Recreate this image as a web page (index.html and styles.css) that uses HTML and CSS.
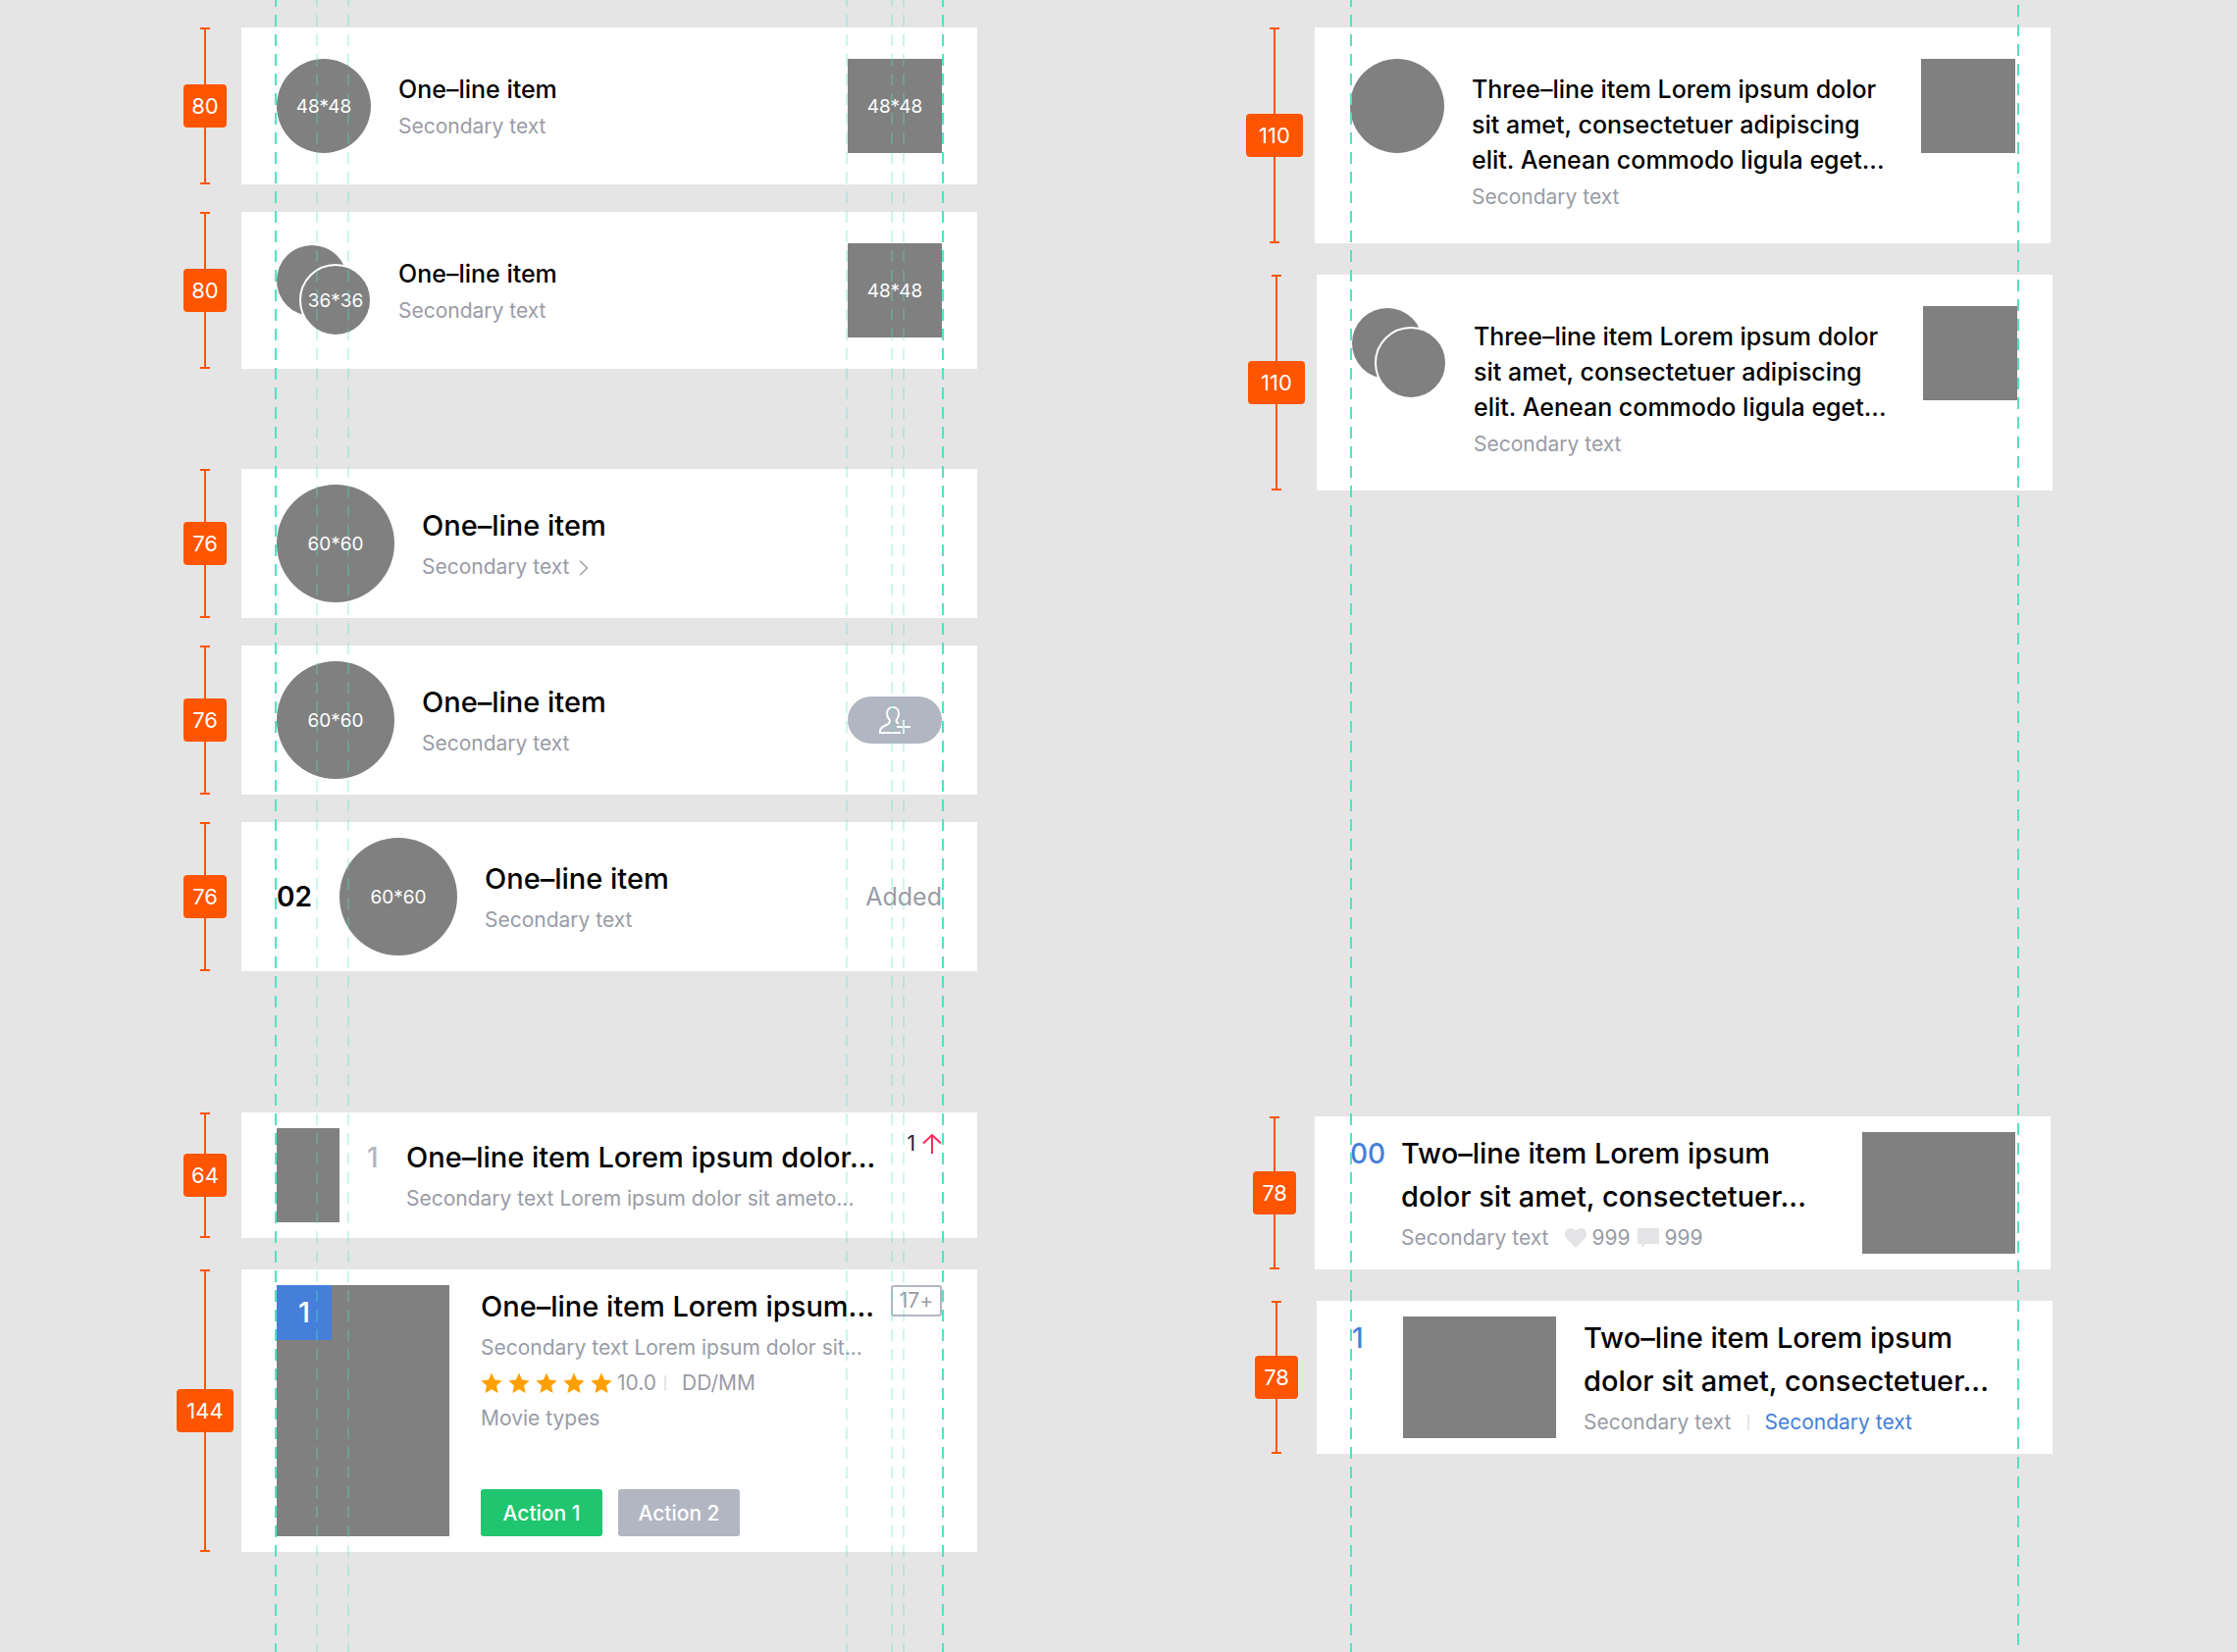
FILE: index.html
```html
<!DOCTYPE html>
<html lang="en">
<head>
<meta charset="utf-8">
<meta name="viewport" content="width=device-width, initial-scale=1">
<title>List item specs</title>
<link rel="stylesheet" href="styles.css">
</head>
<body>
<svg class="sprite" aria-hidden="true">
  <symbol id="star" viewBox="0 0 22 22"><path d="M11 .6l3.1 7 7.6.8-5.7 5.1 1.6 7.5L11 17.2 4.400 21l1.600-7.500L.3 8.400l7.600-.8z"/></symbol>
</svg>
<main class="board">

  <div class="column">
    <section class="group">
      <article class="row">
        <div class="measure"><span class="measure-value">80</span></div>
        <div class="card card-roomy">
          <div class="thumb avatar">48*48</div>
          <div class="text">
            <h3 class="title">One–line item</h3>
            <p class="secondary">Secondary text</p>
          </div>
          <div class="thumb square">48*48</div>
        </div>
      </article>
      <article class="row">
        <div class="measure"><span class="measure-value">80</span></div>
        <div class="card card-roomy">
          <div class="stack"><div class="stack-back"></div><div class="thumb stack-front">36*36</div></div>
          <div class="text">
            <h3 class="title">One–line item</h3>
            <p class="secondary">Secondary text</p>
          </div>
          <div class="thumb square">48*48</div>
        </div>
      </article>
    </section>

    <section class="group group-people">
      <article class="row">
        <div class="measure"><span class="measure-value">76</span></div>
        <div class="card card-person">
          <div class="thumb avatar-large">60*60</div>
          <div class="text">
            <h3 class="title title-large">One–line item</h3>
            <p class="secondary">Secondary text
              <svg class="chevron" width="10" height="16" viewBox="0 0 10 16" aria-hidden="true"><path d="M1 .7l7.500 7.300L1 15.300"/></svg>
            </p>
          </div>
        </div>
      </article>
      <article class="row">
        <div class="measure"><span class="measure-value">76</span></div>
        <div class="card card-person">
          <div class="thumb avatar-large">60*60</div>
          <div class="text">
            <h3 class="title title-large">One–line item</h3>
            <p class="secondary">Secondary text</p>
          </div>
          <button class="follow" type="button" aria-label="Add contact">
            <svg width="32" height="28" viewBox="0 0 32 28" aria-hidden="true"><path d="M20 17.500Q17.200 17 17.700 14Q20 11 20 7.200C20 3.300 17.500 1 14 1S8 3.300 8 7.200Q8 11 10.700 14Q11.500 17.200 7.500 19Q1 21.500 1 25V27H22M18 21H32M25 14V28"/></svg>
          </button>
        </div>
      </article>
      <article class="row">
        <div class="measure"><span class="measure-value">76</span></div>
        <div class="card card-person">
          <div class="rank">02</div>
          <div class="thumb avatar-large">60*60</div>
          <div class="text">
            <h3 class="title title-large">One–line item</h3>
            <p class="secondary">Secondary text</p>
          </div>
          <div class="state">Added</div>
        </div>
      </article>
    </section>

    <section class="group group-media">
      <article class="row">
        <div class="measure"><span class="measure-value">64</span></div>
        <div class="card card-chart">
          <div class="thumb cover"></div>
          <div class="number number-muted">1</div>
          <div class="text">
            <h3 class="title title-large">One–line item Lorem ipsum dolor...</h3>
            <p class="secondary">Secondary text Lorem ipsum dolor sit ameto...</p>
          </div>
          <div class="trend">1
            <svg width="20" height="20" viewBox="0 0 20 20" aria-hidden="true"><path d="M10 20V1M1 9.500L10 1L19 9.500"/></svg>
          </div>
        </div>
      </article>
      <article class="row">
        <div class="measure"><span class="measure-value measure-wide">144</span></div>
        <div class="card card-movie">
          <div class="thumb poster"><span class="poster-rank">1</span></div>
          <div class="text text-movie">
            <h3 class="title title-large">One–line item Lorem ipsum...</h3>
            <p class="secondary">Secondary text Lorem ipsum dolor sit...</p>
            <p class="secondary rating">
              <span class="stars">
                <svg><use href="#star"/></svg><svg><use href="#star"/></svg><svg><use href="#star"/></svg><svg><use href="#star"/></svg><svg><use href="#star"/></svg>
              </span>
              <span class="score">10.0</span>
              <span class="divider"></span>
              <span>DD/MM</span>
            </p>
            <p class="secondary">Movie types</p>
            <div class="actions">
              <button class="action action-primary" type="button">Action 1</button>
              <button class="action" type="button">Action 2</button>
            </div>
          </div>
          <div class="age">17+</div>
        </div>
      </article>
    </section>

    <i class="guide" style="left:100px"></i>
    <i class="guide guide-soft" style="left:142px"></i>
    <i class="guide guide-soft" style="left:174px"></i>
    <i class="guide guide-soft" style="right:132px"></i>
    <i class="guide guide-soft" style="right:86px"></i>
    <i class="guide guide-soft" style="right:74px"></i>
    <i class="guide" style="right:34px"></i>
  </div>

  <div class="column column-wide">
    <section class="group group-loose">
      <article class="row">
        <div class="measure"><span class="measure-value measure-wide">110</span></div>
        <div class="card card-roomy card-tall">
          <div class="thumb avatar"></div>
          <div class="text">
            <h3 class="title">Three–line item Lorem ipsum dolor<br>sit amet, consectetuer adipiscing<br>elit. Aenean commodo ligula eget...</h3>
            <p class="secondary">Secondary text</p>
          </div>
          <div class="thumb square"></div>
        </div>
      </article>
      <article class="row row-inset">
        <div class="measure"><span class="measure-value measure-wide">110</span></div>
        <div class="card card-roomy card-tall">
          <div class="stack"><div class="stack-back"></div><div class="thumb stack-front"></div></div>
          <div class="text">
            <h3 class="title">Three–line item Lorem ipsum dolor<br>sit amet, consectetuer adipiscing<br>elit. Aenean commodo ligula eget...</h3>
            <p class="secondary">Secondary text</p>
          </div>
          <div class="thumb square"></div>
        </div>
      </article>
    </section>

    <section class="group group-loose group-news">
      <article class="row">
        <div class="measure"><span class="measure-value">78</span></div>
        <div class="card card-news">
          <div class="number">00</div>
          <div class="text">
            <h3 class="title title-large">Two–line item Lorem ipsum<br>dolor sit amet, consectetuer...</h3>
            <p class="secondary meta">Secondary text
              <span class="count"><svg width="22" height="20" viewBox="0 0 22 20" aria-hidden="true"><path d="M11 20L2 11C-.8 8-.6 4 1.500 1.900C4-.7 8.500-.6 11 2.600C13.500-.6 18-.7 20.500 1.900C22.600 4 22.800 8 20 11z"/></svg>999</span>
              <span class="count"><svg width="22" height="20" viewBox="0 0 22 20" aria-hidden="true"><path d="M1 0H21Q22 0 22 1V15Q22 16 21 16H8L4 20V16H1Q0 16 0 15V1Q0 0 1 0z"/></svg>999</span>
            </p>
          </div>
          <div class="thumb picture"></div>
        </div>
      </article>
      <article class="row row-inset">
        <div class="measure"><span class="measure-value">78</span></div>
        <div class="card card-news">
          <div class="number">1</div>
          <div class="thumb picture"></div>
          <div class="text text-after-picture">
            <h3 class="title title-large">Two–line item Lorem ipsum<br>dolor sit amet, consectetuer...</h3>
            <p class="secondary linked">Secondary text <span class="divider"></span> <a class="link" href="#">Secondary text</a></p>
          </div>
        </div>
      </article>
    </section>

    <i class="guide" style="left:106px"></i>
    <i class="guide guide-late" style="right:34px"></i>
  </div>

</main>
</body>
</html>
```
FILE: styles.css
```css
* { box-sizing: border-box; }

body {
  margin: 0;
  background: #e5e5e5;
  color: #000;
  font-family: Inter, "Liberation Sans", sans-serif;
  font-feature-settings: "calt" 0;
}

h3, p { margin: 0; font-weight: inherit; }
button { border: 0; padding: 0; font: inherit; cursor: pointer; }
.sprite { position: absolute; width: 0; height: 0; }

.board {
  display: grid;
  grid-template-columns: 816fr 822fr;
  gap: 274px;
  min-height: 100vh;
  padding: 0 188px 0 180px;
}

.column { position: relative; padding: 28px 0; }
.column-wide { --measure-gap: 12px; }

.group { display: flex; flex-direction: column; gap: 28px; }
.group-people { margin-top: 102px; }
.group-media { margin-top: 144px; gap: 32px; }
.group-loose { gap: 32px; }
.group-news { margin-top: 638px; }

.row { display: flex; gap: var(--measure-gap, 8px); }
.column-wide .row { margin-right: 2px; }
.column-wide .row-inset { margin-right: 0; margin-left: 2px; }

/* Height measure: a capped line with the value in the middle */
.measure {
  flex: none;
  display: grid;
  place-items: center;
  width: 58px;
  background:
    linear-gradient(#f50, #f50) center top / 10px 2px no-repeat,
    linear-gradient(#f50, #f50) center bottom / 10px 2px no-repeat,
    linear-gradient(#f50, #f50) center / 2px 100% no-repeat;
}
.measure-value {
  width: 44px;
  border-radius: 4px;
  background: #f50;
  color: #fff;
  font-size: 22px;
  line-height: 44px;
  text-align: center;
}
.measure-wide { width: 58px; }

.card {
  flex: 1;
  min-width: 0;
  display: flex;
  align-items: flex-start;
  background: #fff;
}
.card-roomy { min-height: 160px; padding: 32px 36px; gap: 28px; }
.card-tall { min-height: 220px; padding-bottom: 0; }
.card-person { min-height: 152px; padding: 16px 36px; gap: 28px; align-items: center; }
.card-chart { min-height: 128px; padding: 16px 36px; }
.card-movie { min-height: 288px; padding: 16px 36px; }
.card-news { min-height: 156px; padding: 16px 36px 12px; }

.thumb {
  flex: none;
  display: grid;
  place-items: center;
  background: #808080;
  color: #fff;
  font-size: 19px;
}
.avatar { width: 96px; height: 96px; border-radius: 50%; }
.avatar-large { width: 120px; height: 120px; border-radius: 50%; }
.square { width: 96px; height: 96px; }
.cover { width: 64px; height: 96px; margin-right: 28px; }
.picture { width: 156px; height: 124px; }
.poster { width: 176px; height: 256px; place-items: start; }
.poster-rank {
  width: 56px;
  background: #457fd9;
  font-size: 29px;
  font-weight: 500;
  line-height: 56px;
  text-align: center;
}

.stack { position: relative; flex: none; width: 96px; height: 96px; }
.stack-back {
  position: absolute;
  left: 0;
  top: 2px;
  width: 72px;
  height: 72px;
  border-radius: 50%;
  background: #808080;
}
.stack-front {
  position: absolute;
  left: 23px;
  top: 21px;
  width: 74px;
  height: 74px;
  border: 2px solid #fff;
  border-radius: 50%;
}

.text { flex: 1; min-width: 0; white-space: nowrap; }
.card-roomy .text { padding-top: 13px; }
.card-person .text { align-self: flex-start; padding-top: 20px; }
.card-chart .text { padding-top: 8px; }
.text-movie { margin-left: 32px; }
.text-after-picture { margin-left: 28px; }

.title { font-size: 25px; font-weight: 500; line-height: 36px; margin-bottom: 2px; }
.title-large { font-size: 29px; line-height: 44px; }
.secondary { color: #999ca6; font-size: 21px; line-height: 36px; }
.secondary svg { flex: none; }

.chevron { margin-left: 4px; vertical-align: -2px; fill: none; stroke: #999ca6; stroke-width: 1.4; }

.rank { width: 36px; font-size: 28px; font-weight: 600; line-height: 44px; }
.state { color: #999ca6; font-size: 25px; line-height: 44px; }

.follow {
  display: grid;
  place-items: center;
  width: 96px;
  height: 48px;
  border-radius: 24px;
  background: #b2b6c2;
}
.follow svg { fill: none; stroke: #fff; stroke-width: 2; }

.number { width: 52px; color: #457fd9; font-size: 28px; font-weight: 500; line-height: 44px; }
.number-muted { width: 40px; margin-top: 8px; color: #b2b6c2; }

.trend {
  display: flex;
  align-items: center;
  gap: 7px;
  padding-top: 2px;
  color: #1c2438;
  font-size: 21px;
  line-height: 28px;
}
.trend svg { fill: none; stroke: #fa2c5a; stroke-width: 2; }

.rating, .meta, .linked { display: flex; align-items: center; }
.stars { display: flex; gap: 6px; }
.stars svg { width: 22px; height: 22px; fill: #ff9f00; }
.score { margin-left: 5px; }
.divider { width: 2px; height: 16px; background: #e5e6eb; }
.rating .divider { margin: 0 16px 0 8px; }
.linked { gap: 16px; }
.meta { gap: 7px; }
.count { display: flex; align-items: center; gap: 6px; }
.count:first-of-type { margin-left: 9px; }
.count svg { fill: #e4e4e6; }
.link { color: #457fd9; text-decoration: none; }

.actions { display: flex; gap: 16px; margin-top: 54px; }
.action {
  width: 124px;
  height: 48px;
  border-radius: 3px;
  background: #b2b6c2;
  color: #fff;
  font-size: 21px;
  font-weight: 500;
}
.action-primary { background: #20c56f; }

.age {
  flex: none;
  width: 52px;
  border: 2px solid #b2b6c2;
  border-radius: 3px;
  color: #999ca6;
  font-size: 21px;
  line-height: 28px;
  text-align: center;
}

/* Dashed keylines drawn over the cards */
.guide {
  position: absolute;
  top: 0;
  bottom: 0;
  width: 2px;
  background: linear-gradient(#50e3c2 12px, transparent 12px) 0 15px / 2px 20px;
  pointer-events: none;
}
.guide-late { background-position-y: 5px; }
.guide-soft { opacity: .3; }
```
